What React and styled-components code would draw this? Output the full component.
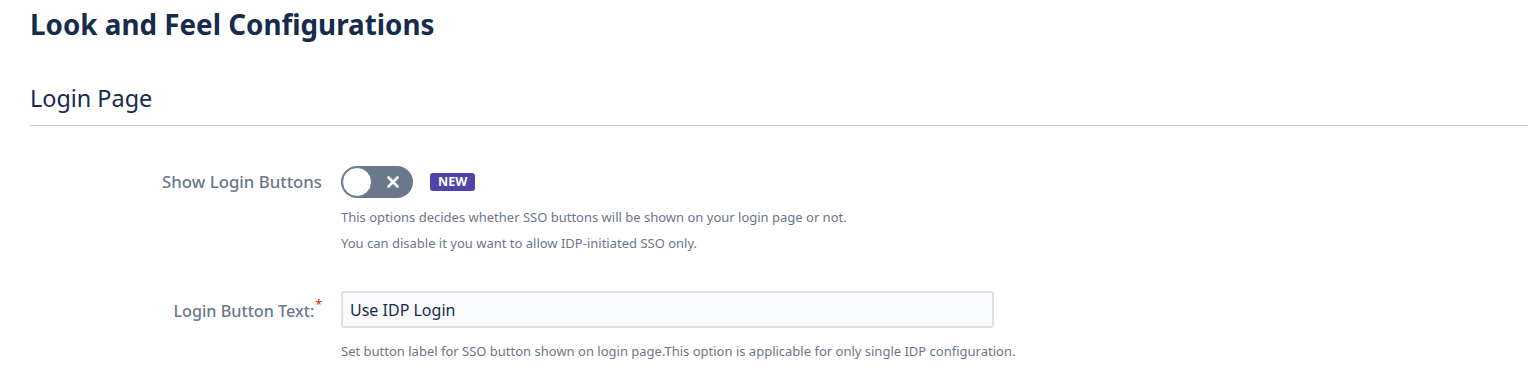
import styled, { createGlobalStyle } from "styled-components";

const GlobalStyle = createGlobalStyle`
  body {
    margin: 0;
    background: #ffffff;
    font-family: "Noto Sans", "Open Sans", sans-serif;
    color: #172b4d;
  }
`;

export default function App() {
  return (
    <>
      <GlobalStyle />
      <Pagina>
        <Titulo>Look and Feel Configurations</Titulo>
        <Secao>Login Page</Secao>
        <Formulario>
          <Campo>
            <Rotulo>Show Login Buttons</Rotulo>
            <Conteudo>
              <Linha>
                <Toggle>
                  <Bolinha />
                  <svg width="14" height="14" viewBox="0 0 14 14">
                    <path
                      d="M2.5 2.5 L11.5 11.5 M11.5 2.5 L2.5 11.5"
                      stroke="#fff"
                      strokeWidth="2.6"
                      strokeLinecap="round"
                    />
                  </svg>
                </Toggle>
                <Selo>NEW</Selo>
              </Linha>
              <Ajuda $topo={6}>
                This options decides whether SSO buttons will be shown on your
                login page or not.
              </Ajuda>
              <Ajuda>You can disable it you want to allow IDP-initiated SSO only.</Ajuda>
            </Conteudo>
          </Campo>
          <Campo $espaco>
            <Rotulo $meio>
              Login Button Text:<Obrigatorio>*</Obrigatorio>
            </Rotulo>
            <Conteudo>
              <Entrada type="text" defaultValue="Use IDP Login" />
              <Ajuda $topo={10}>
                Set button label for SSO button shown on login page.This option is
                applicable for only single IDP configuration.
              </Ajuda>
            </Conteudo>
          </Campo>
        </Formulario>
      </Pagina>
    </>
  );
}

const Pagina = styled.div`
  padding: 4px 0 0 30px;
`;

const Titulo = styled.h1`
  margin: 0;
  font-size: 27.8px;
  font-weight: 700;
  line-height: 40px;
  color: #172b4d;
`;

const Secao = styled.h2`
  margin: 38px 0 0;
  padding-bottom: 11px;
  font-size: 23.4px;
  font-weight: 400;
  line-height: 32px;
  color: #172b4d;
  border-bottom: 1px solid #cccccc;
`;

const Formulario = styled.div`
  padding-top: 40px;
`;

const Campo = styled.div`
  display: flex;
  align-items: flex-start;
  margin-top: ${(p) => (p.$espaco ? "35px" : "0")};
`;

const Rotulo = styled.div`
  width: 292px;
  flex-shrink: 0;
  text-align: right;
  padding-right: 19px;
  font-size: ${(p) => (p.$meio ? "16.2px" : "16.8px")};
  line-height: 32px;
  padding-top: ${(p) => (p.$meio ? "4px" : "0")};
  color: #6b778c;
  font-weight: 500;
`;

const Obrigatorio = styled.span`
  color: #de350b;
  font-size: 12px;
  vertical-align: top;
  position: relative;
  top: -6px;
  margin-left: 1px;
`;

const Conteudo = styled.div`
  display: flex;
  flex-direction: column;
`;

const Linha = styled.div`
  display: flex;
  align-items: center;
  gap: 17px;
`;

const Toggle = styled.div`
  position: relative;
  width: 72px;
  height: 32px;
  border-radius: 16px;
  background: #6b778c;
  display: flex;
  align-items: center;
  justify-content: flex-end;
  padding-right: 13px;
  box-sizing: border-box;
`;

const Bolinha = styled.span`
  position: absolute;
  left: 1px;
  top: 1px;
  width: 30px;
  height: 30px;
  border-radius: 50%;
  background: #ffffff;
  box-sizing: border-box;
  border: 1px solid #6b778c;
`;

const Selo = styled.span`
  background: #5243aa;
  color: #ffffff;
  font-size: 12.5px;
  font-weight: 700;
  line-height: 18px;
  padding: 0 8px;
  border-radius: 3px;
`;

const Ajuda = styled.div`
  font-size: 13px;
  line-height: 26px;
  color: #6b778c;
  margin-top: ${(p) => (p.$topo || 0) + "px"};
`;

const Entrada = styled.input`
  width: 653px;
  height: 37px;
  box-sizing: border-box;
  border: 2px solid #dfe1e6;
  border-radius: 3px;
  background: #fafbfc;
  padding: 0 7px;
  font-family: "Noto Sans", "Open Sans", sans-serif;
  font-size: 16px;
  color: #172b4d;
  outline: none;
`;
